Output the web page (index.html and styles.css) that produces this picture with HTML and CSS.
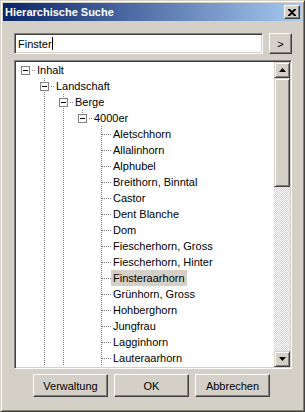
FILE: index.html
```html
<!DOCTYPE html>
<html lang="de">
<head>
    <meta charset="UTF-8">
    <meta name="viewport" content="width=device-width, initial-scale=1.0">
    <title>Hierarchische Suche</title>
    <link rel="stylesheet" href="styles.css">
</head>
<body>
    <div class="window">
        <div class="titlebar">
            <span class="title">Hierarchische Suche</span>
            <span class="close">
                <svg width="8" height="7" viewBox="0 0 8 7"><path d="M0 0h2l2 2 2-2h2v1L5 3.5 8 6v1H6L4 5 2 7H0V6l3-2.5L0 1z" fill="#000"/></svg>
            </span>
        </div>

        <div class="content">
            <div class="search-row">
                <div class="input">Finster<span class="caret"></span></div>
                <button class="btn go">&gt;</button>
            </div>

            <div class="tree-box">
                <div class="tree">
                    <div class="row"><span class="cell"><span class="box"></span><span class="hdot short"></span></span><span class="label">Inhalt</span></div>
                    <div class="row"><span class="cell"></span><span class="cell vline"><span class="box"></span><span class="hdot short"></span></span><span class="label">Landschaft</span></div>
                    <div class="row"><span class="cell"></span><span class="cell vline"></span><span class="cell vline"><span class="box"></span><span class="hdot short"></span></span><span class="label">Berge</span></div>
                    <div class="row"><span class="cell"></span><span class="cell vline"></span><span class="cell vline"></span><span class="cell up"><span class="box"></span><span class="hdot short"></span></span><span class="label">4000er</span></div>
                    <div class="row"><span class="cell"></span><span class="cell vline"></span><span class="cell vline"></span><span class="cell"></span><span class="cell vline"><span class="hdot"></span></span><span class="label">Aletschhorn</span></div>
                    <div class="row"><span class="cell"></span><span class="cell vline"></span><span class="cell vline"></span><span class="cell"></span><span class="cell vline"><span class="hdot"></span></span><span class="label">Allalinhorn</span></div>
                    <div class="row"><span class="cell"></span><span class="cell vline"></span><span class="cell vline"></span><span class="cell"></span><span class="cell vline"><span class="hdot"></span></span><span class="label">Alphubel</span></div>
                    <div class="row"><span class="cell"></span><span class="cell vline"></span><span class="cell vline"></span><span class="cell"></span><span class="cell vline"><span class="hdot"></span></span><span class="label">Breithorn, Binntal</span></div>
                    <div class="row"><span class="cell"></span><span class="cell vline"></span><span class="cell vline"></span><span class="cell"></span><span class="cell vline"><span class="hdot"></span></span><span class="label">Castor</span></div>
                    <div class="row"><span class="cell"></span><span class="cell vline"></span><span class="cell vline"></span><span class="cell"></span><span class="cell vline"><span class="hdot"></span></span><span class="label">Dent Blanche</span></div>
                    <div class="row"><span class="cell"></span><span class="cell vline"></span><span class="cell vline"></span><span class="cell"></span><span class="cell vline"><span class="hdot"></span></span><span class="label">Dom</span></div>
                    <div class="row"><span class="cell"></span><span class="cell vline"></span><span class="cell vline"></span><span class="cell"></span><span class="cell vline"><span class="hdot"></span></span><span class="label">Fiescherhorn, Gross</span></div>
                    <div class="row"><span class="cell"></span><span class="cell vline"></span><span class="cell vline"></span><span class="cell"></span><span class="cell vline"><span class="hdot"></span></span><span class="label">Fiescherhorn, Hinter</span></div>
                    <div class="row"><span class="cell"></span><span class="cell vline"></span><span class="cell vline"></span><span class="cell"></span><span class="cell vline"><span class="hdot"></span></span><span class="label selected">Finsteraarhorn</span></div>
                    <div class="row"><span class="cell"></span><span class="cell vline"></span><span class="cell vline"></span><span class="cell"></span><span class="cell vline"><span class="hdot"></span></span><span class="label">Grünhorn, Gross</span></div>
                    <div class="row"><span class="cell"></span><span class="cell vline"></span><span class="cell vline"></span><span class="cell"></span><span class="cell vline"><span class="hdot"></span></span><span class="label">Hohberghorn</span></div>
                    <div class="row"><span class="cell"></span><span class="cell vline"></span><span class="cell vline"></span><span class="cell"></span><span class="cell vline"><span class="hdot"></span></span><span class="label">Jungfrau</span></div>
                    <div class="row"><span class="cell"></span><span class="cell vline"></span><span class="cell vline"></span><span class="cell"></span><span class="cell vline"><span class="hdot"></span></span><span class="label">Lagginhorn</span></div>
                    <div class="row"><span class="cell"></span><span class="cell vline"></span><span class="cell vline"></span><span class="cell"></span><span class="cell vline"><span class="hdot"></span></span><span class="label">Lauteraarhorn</span></div>
                </div>

                <div class="scrollbar">
                    <span class="sb-btn"><svg width="7" height="4" viewBox="0 0 7 4"><path d="M3.5 0L7 4H0z" fill="#000"/></svg></span>
                    <span class="thumb"></span>
                    <span class="track"></span>
                    <span class="sb-btn"><svg width="7" height="4" viewBox="0 0 7 4"><path d="M0 0h7L3.5 4z" fill="#000"/></svg></span>
                </div>
            </div>

            <div class="actions">
                <button class="btn">Verwaltung</button>
                <button class="btn">OK</button>
                <button class="btn">Abbrechen</button>
            </div>
        </div>
    </div>
</body>
</html>
```

FILE: styles.css
```css
* {
    box-sizing: border-box;
}
body {
    margin: 0;
    font-family: "Liberation Sans", Arial, sans-serif;
    font-size: 11px;
    color: black;
    background-color: #d4d0c8;
}
.window {
    width: 305px;
    height: 412px;
    background-color: #d4d0c8;
    border: 1px solid;
    border-color: #d4d0c8 #404040 #404040 #d4d0c8;
    box-shadow: inset 1px 1px #fff, inset -1px -1px #808080;
    padding: 2px;
}
.titlebar {
    height: 18px;
    display: flex;
    align-items: center;
    justify-content: space-between;
    padding: 0 2px;
    background: linear-gradient(to right, #0a246a, #a6caf0);
}
.title {
    color: white;
    font-weight: bold;
    font-size: 11px;
}
.close {
    width: 16px;
    height: 14px;
    display: flex;
    align-items: center;
    justify-content: center;
    background-color: #d4d0c8;
    border: 1px solid;
    border-color: #fff #404040 #404040 #fff;
    box-shadow: inset -1px -1px #808080;
}
.content {
    padding: 12px 10px 0 11px;
}
.search-row {
    display: flex;
    gap: 6px;
    height: 21px;
}
.input {
    width: 249px;
    height: 21px;
    background-color: white;
    border: 1px solid;
    border-color: #808080 #fff #fff #808080;
    box-shadow: inset 1px 1px #404040, inset -1px -1px #d4d0c8;
    padding: 0 0 0 3px;
    display: flex;
    align-items: center;
}
.caret {
    display: inline-block;
    width: 1px;
    height: 13px;
    background-color: black;
}
.btn {
    font-family: "Liberation Sans", Arial, sans-serif;
    font-size: 11px;
    color: black;
    background-color: #d4d0c8;
    border: 1px solid;
    border-color: #fff #404040 #404040 #fff;
    box-shadow: inset -1px -1px #808080;
    padding: 0;
    width: 75px;
    height: 23px;
}
.go {
    width: 23px;
    height: 21px;
}
.tree-box {
    margin-top: 6px;
    height: 309px;
    display: flex;
    border: 1px solid;
    border-color: #808080 #fff #fff #808080;
    box-shadow: inset 1px 1px #404040, inset -1px -1px #d4d0c8;
    padding: 1px;
    background-color: white;
}
.tree {
    flex: 1;
    overflow: hidden;
    background-color: white;
}
.row {
    height: 16px;
    display: flex;
    align-items: center;
    white-space: nowrap;
}
.cell {
    width: 19px;
    height: 16px;
    flex: none;
    display: flex;
    align-items: center;
    background-repeat: no-repeat;
}
.vline {
    background-image: linear-gradient(#808080 50%, transparent 50%);
    background-size: 1px 2px;
    background-repeat: repeat-y;
    background-position: 9px 0;
}
/* last child: line only down to the middle of the row */
.up {
    background-image: linear-gradient(transparent 8px, white 8px), linear-gradient(#808080 50%, transparent 50%);
    background-size: 1px 16px, 1px 2px;
    background-repeat: no-repeat, repeat-y;
    background-position: 9px 0, 9px 0;
}
.box {
    width: 9px;
    height: 9px;
    margin-left: 5px;
    border: 1px solid #808080;
    background: white linear-gradient(black, black) center / 5px 1px no-repeat;
    flex: none;
}
.hdot {
    width: 9px;
    height: 1px;
    margin-left: 10px;
    background-image: linear-gradient(to right, #808080 50%, transparent 50%);
    background-size: 2px 1px;
}
.hdot.short {
    width: 5px;
    margin-left: 1px;
    background-position: 1px 0;
}
.label {
    padding: 0 2px;
    line-height: 16px;
}
.selected {
    background-color: #d4d0c8;
}
.scrollbar {
    width: 16px;
    display: flex;
    flex-direction: column;
}
.sb-btn {
    height: 16px;
    flex: none;
    display: flex;
    align-items: center;
    justify-content: center;
    background-color: #d4d0c8;
    border: 1px solid;
    border-color: #d4d0c8 #404040 #404040 #d4d0c8;
    box-shadow: inset 1px 1px #fff, inset -1px -1px #808080;
}
.thumb {
    height: 109px;
    flex: none;
    background-color: #d4d0c8;
    border: 1px solid;
    border-color: #d4d0c8 #404040 #404040 #d4d0c8;
    box-shadow: inset 1px 1px #fff, inset -1px -1px #808080;
}
.track {
    flex: 1;
    background: repeating-conic-gradient(#fff 0 25%, #d4d0c8 0 50%) 0 0 / 2px 2px;
}
.actions {
    margin-top: 5px;
    display: flex;
    justify-content: center;
    gap: 6px;
    padding-right: 3px;
}
```
